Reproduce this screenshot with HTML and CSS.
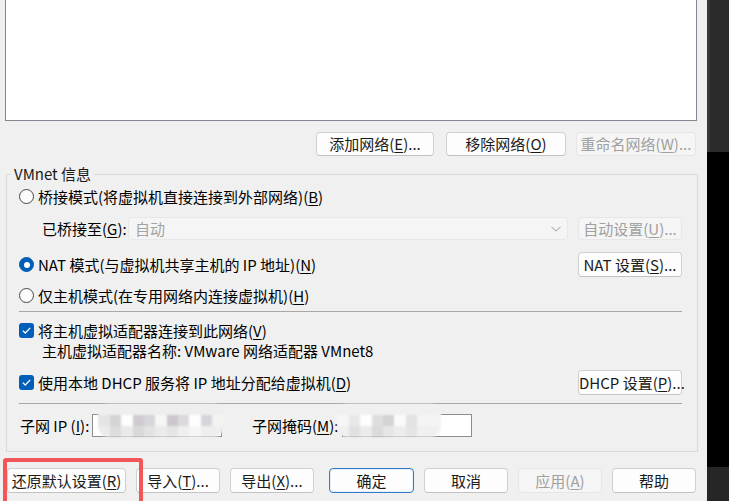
FILE: index.html
```html
<!DOCTYPE html>
<html lang="zh-CN">
<head>
    <meta charset="UTF-8">
    <meta name="viewport" content="width=device-width, initial-scale=1.0">
    <title>虚拟网络编辑器</title>
    <link rel="stylesheet" href="styles.css">
</head>
<body>
    <div class="screen">
        <div class="dialog">
            <div class="net-list"></div>

            <div class="top-actions">
                <button class="btn btn-add">添加网络(<u>E</u>)...</button>
                <button class="btn btn-wide">移除网络(<u>O</u>)</button>
                <button class="btn btn-wide" disabled>重命名网络(<u>W</u>)...</button>
            </div>

            <fieldset class="group">
                <legend>VMnet 信息</legend>

                <div class="opt row-bridge">
                    <span class="radio"></span>桥接模式(将虚拟机直接连接到外部网络)(<u>B</u>)
                </div>

                <div class="row row-bridged-to">
                    <span class="field-label">已桥接至(<u>G</u>):</span>
                    <div class="combo">
                        <span>自动</span>
                        <svg width="12" height="8" viewBox="0 0 12 8"><path d="M1.5 1.8 L6 6 L10.5 1.8" fill="none" stroke="#b5b5b5" stroke-width="1.1"/></svg>
                    </div>
                    <button class="btn btn-side btn-short" disabled>自动设置(<u>U</u>)...</button>
                </div>

                <div class="row row-nat">
                    <div class="opt"><span class="radio on"></span>NAT 模式(与虚拟机共享主机的 IP 地址)(<u>N</u>)</div>
                    <button class="btn btn-side">NAT 设置(<u>S</u>)...</button>
                </div>

                <div class="opt row-host">
                    <span class="radio"></span>仅主机模式(在专用网络内连接虚拟机)(<u>H</u>)
                </div>

                <div class="sep sep-a"></div>

                <div class="opt row-check">
                    <span class="check"><svg width="15" height="15" viewBox="0 0 15 15"><path d="M3.8 7.6 L6.3 10 L11.2 4.9" fill="none" stroke="#fff" stroke-width="1.3"/></svg></span>将主机虚拟适配器连接到此网络(<u>V</u>)
                </div>
                <div class="adapter-name">主机虚拟适配器名称: VMware 网络适配器 VMnet8</div>

                <div class="row row-dhcp">
                    <div class="opt"><span class="check"><svg width="15" height="15" viewBox="0 0 15 15"><path d="M3.8 7.6 L6.3 10 L11.2 4.9" fill="none" stroke="#fff" stroke-width="1.3"/></svg></span>使用本地 DHCP 服务将 IP 地址分配给虚拟机(<u>D</u>)</div>
                    <button class="btn btn-side">DHCP 设置(<u>P</u>)...</button>
                </div>

                <div class="sep sep-b"></div>

                <div class="row row-subnet">
                    <span class="subnet-label">子网 IP (<u>I</u>):</span>
                    <div class="text-box">
                        <div class="mosaic mosaic-ip"></div>
                    </div>
                    <span class="subnet-label mask-label">子网掩码(<u>M</u>):</span>
                    <div class="text-box">
                        <div class="mosaic mosaic-mask"></div>
                    </div>
                </div>
            </fieldset>

            <div class="footer">
                <button class="btn btn-reset">还原默认设置(<u>R</u>)</button>
                <button class="btn btn-foot">导入(<u>T</u>)...</button>
                <button class="btn btn-foot">导出(<u>X</u>)...</button>
                <button class="btn btn-foot btn-default">确定</button>
                <button class="btn btn-foot">取消</button>
                <button class="btn btn-foot" disabled>应用(<u>A</u>)</button>
                <button class="btn btn-foot">帮助</button>
            </div>

            <div class="highlight"></div>
        </div>

        <div class="side">
            <div class="side-top"></div>
            <div class="side-mid"></div>
            <div class="side-bottom"></div>
        </div>
    </div>
</body>
</html>
```

FILE: styles.css
```css
body {
    margin: 0;
    font-family: "Noto Sans CJK SC", sans-serif;
    font-size: 15px;
    color: #000;
    background-color: #f0f0f0;
    overflow: hidden;
}
u {
    text-underline-offset: 2px;
    text-decoration-thickness: 1px;
}
.screen {
    display: flex;
    width: 729px;
    height: 501px;
}
.dialog {
    position: relative;
    width: 707px;
    background-color: #f0f0f0;
}

/* network list (top is scrolled off) */
.net-list {
    margin-left: 5px;
    width: 690px;
    height: 120px;
    background-color: #fff;
    border: 1px solid #868793;
    border-top: none;
}

/* buttons */
.btn {
    box-sizing: border-box;
    height: 25px;
    padding: 0;
    font: inherit;
    line-height: 22px;
    color: #1a1a1a;
    background-color: #fdfdfd;
    border: 1px solid #d0d0d0;
    border-bottom-color: #c2c2c2;
    border-radius: 4px;
    text-align: center;
    white-space: nowrap;
}
.btn:disabled {
    color: #a0a0a0;
    background-color: #f5f5f5;
    border-color: #e6e6e6;
}
.btn-default {
    border: 1px solid #2f7bc9;
    box-shadow: inset 0 0 0 1px #e6f0fa;
}
.top-actions {
    display: flex;
    justify-content: flex-end;
    gap: 10px;
    margin: 11px 11px 0 0;
}
.top-actions .btn {
    height: 24px;
}
.btn-add {
    width: 118px;
    margin-right: 2px;
}
.btn-wide {
    width: 120px;
}
.btn-side {
    width: 104px;
    flex-shrink: 0;
}
.btn-short {
    height: 23px;
}

/* group box */
.group {
    box-sizing: border-box;
    width: 691px;
    margin: 9px 0 0 6px;
    padding: 0 15px 14px 12px;
    border: 1px solid #dadada;
}
.group legend {
    margin-left: -8px;
    padding: 0 3px;
    line-height: 18px;
    color: #1a1a1a;
}
.row {
    display: flex;
    align-items: center;
    justify-content: space-between;
}
.opt {
    display: flex;
    align-items: center;
    white-space: nowrap;
}
.radio {
    flex-shrink: 0;
    box-sizing: border-box;
    width: 15px;
    height: 15px;
    margin-right: 4px;
    border: 1px solid #474747;
    border-radius: 50%;
    background-color: #fbfbfb;
    position: relative;
}
.radio.on {
    background-color: #005fb8;
    border-color: #005fb8;
}
.radio.on::after {
    content: "";
    position: absolute;
    left: 3.5px;
    top: 3.5px;
    width: 6px;
    height: 6px;
    border-radius: 50%;
    background-color: #fff;
}
.check {
    flex-shrink: 0;
    width: 15px;
    height: 15px;
    margin-right: 4px;
    border-radius: 3px;
    background-color: #005fb8;
    display: flex;
}
.row-bridge {
    height: 26px;
}
.row-bridged-to {
    height: 23px;
    margin-top: 8px;
    padding-left: 23px;
}
.field-label {
    width: 86px;
    white-space: nowrap;
}
.combo {
    box-sizing: border-box;
    width: 440px;
    height: 23px;
    display: flex;
    align-items: center;
    justify-content: space-between;
    padding: 0 5px 0 6px;
    margin-right: 10px;
    color: #a3a3a3;
    background-color: #f5f5f5;
    border: 1px solid #e8e8e8;
    border-radius: 3px;
}
.row-nat {
    height: 25px;
    margin-top: 12px;
}
.row-host {
    height: 21px;
    margin-top: 8px;
}
.sep {
    height: 1px;
    background-color: #a8a8a8;
}
.sep-a {
    margin-top: 5px;
}
.row-check {
    height: 19px;
    margin-top: 9px;
}
.adapter-name {
    height: 22px;
    line-height: 22px;
    padding-left: 23px;
    white-space: nowrap;
}
.row-dhcp {
    height: 25px;
    margin-top: 8px;
}
.sep-b {
    margin-top: 8px;
}
.row-subnet {
    height: 23px;
    margin-top: 10px;
    justify-content: flex-start;
    padding-left: 1px;
}
.subnet-label {
    width: 72px;
    white-space: nowrap;
}
.mask-label {
    width: 90px;
    margin-left: 30px;
}
.text-box {
    position: relative;
    box-sizing: border-box;
    width: 130px;
    height: 23px;
    background-color: #fff;
    border: 1px solid #8d8d8d;
}

/* blurred address values */
.mosaic {
    position: absolute;
    top: -11px;
    height: 33px;
    border-radius: 11px;
    filter: blur(0.8px);
}
.mosaic-ip {
    left: 5px;
    width: 126px;
    background:
        linear-gradient(90deg, #e4e4e4 0 12px, #d4d4d4 12px 23px, #fdfdfd 23px 35px, #cfcbd1 35px 46px, #d6d6da 46px 57px, #f6f6f6 57px 69px, #cbc7cd 69px 80px, #dcd9dd 80px 91px, #fefefe 91px 103px, #d6d5da 103px 114px, #f3f3f3 114px) 0 11px / 100% 11px no-repeat,
        linear-gradient(90deg, #ebebeb 0 12px, #dcdcdc 12px 23px, #e9e9e9 23px 35px, #d8d8d8 35px 46px, #e2e2e2 46px 57px, #ebebeb 57px 69px, #e5e5e5 69px 80px, #efefef 80px 91px, #f6f6f6 91px 103px, #eeeeee 103px) 0 22px / 100% 11px no-repeat,
        #eeeeee;
}
.mosaic-mask {
    left: -6px;
    width: 104px;
    background:
        linear-gradient(90deg, #f6f6f6 0 12px, #e8e8e8 12px 23px, #fefefe 23px 35px, #dedede 35px 46px, #d3d3d6 46px 57px, #fbfbfb 57px 69px, #e2e2e2 69px 80px, #f4f4f4 80px) 0 11px / 100% 11px no-repeat,
        linear-gradient(90deg, #efefef 0 12px, #e0e0e0 12px 23px, #ececec 23px 35px, #dadada 35px 46px, #e6e6e6 46px 57px, #ededed 57px 69px, #e4e4e4 69px 80px, #f0f0f0 80px) 0 22px / 100% 11px no-repeat,
        #f0f0f0;
}

/* footer */
.footer {
    display: flex;
    gap: 10px;
    margin: 16px 0 0 7px;
}
.btn-reset {
    width: 119px;
}
.btn-foot {
    width: 84px;
}
.btn-default {
    margin-left: 5px;
    width: 85px;
}

/* red annotation box */
.highlight {
    position: absolute;
    left: 3px;
    top: 458px;
    width: 140px;
    height: 50px;
    box-sizing: border-box;
    border: 4px solid #f25656;
    border-radius: 3px;
}

/* desktop behind the dialog */
.side {
    width: 22px;
    display: flex;
    flex-direction: column;
}
.side-top {
    height: 152px;
    background-color: #2b2b2b;
    border-left: 3px solid #383838;
}
.side-mid {
    flex: 1;
    background-color: #000;
}
.side-bottom {
    height: 34px;
    background-color: #262626;
}
```
